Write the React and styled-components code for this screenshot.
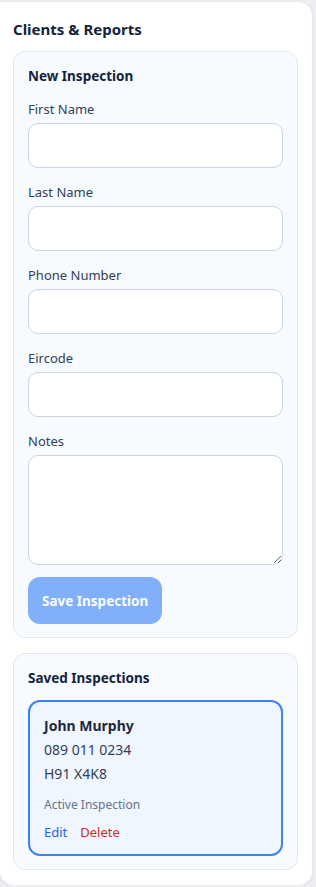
import React, { useState } from 'react';
import styled, { createGlobalStyle } from 'styled-components';

const GlobalStyle = createGlobalStyle`
  html, body {
    margin: 0;
    padding: 0;
    background: #eceef2;
  }
  body {
    font-family: "Noto Sans", "Open Sans", sans-serif;
    color: #1e293b;
  }
  * {
    box-sizing: border-box;
  }
`;

const fields = [
  { key: 'firstName', label: 'First Name' },
  { key: 'lastName', label: 'Last Name' },
  { key: 'phone', label: 'Phone Number' },
  { key: 'eircode', label: 'Eircode' },
];

const App = () => {
  const [form, setForm] = useState({ firstName: '', lastName: '', phone: '', eircode: '', notes: '' });
  const update = (key) => (e) => setForm({ ...form, [key]: e.target.value });

  return (
    <>
      <GlobalStyle />
      <Panel>
        <Title>Clients &amp; Reports</Title>
        <Section>
          <SectionTitle>New Inspection</SectionTitle>
          <Form onSubmit={(e) => e.preventDefault()}>
            {fields.map((f) => (
              <Field key={f.key}>
                <Label>{f.label}</Label>
                <Input value={form[f.key]} onChange={update(f.key)} />
              </Field>
            ))}
            <Field>
              <Label>Notes</Label>
              <TextArea value={form.notes} onChange={update('notes')} />
            </Field>
            <SaveButton type="submit" disabled>Save Inspection</SaveButton>
          </Form>
        </Section>
        <Section>
          <SectionTitle>Saved Inspections</SectionTitle>
          <InspectionCard>
            <ClientName>John Murphy</ClientName>
            <InfoLine>089 011 0234</InfoLine>
            <InfoLine>H91 X4K8</InfoLine>
            <Status>Active Inspection</Status>
            <Actions>
              <LinkButton>Edit</LinkButton>
              <LinkButton danger>Delete</LinkButton>
            </Actions>
          </InspectionCard>
        </Section>
      </Panel>
    </>
  );
};

const Panel = styled.div`
  width: 312px;
  margin-top: 2px;
  min-height: 882px;
  background: #ffffff;
  border-radius: 0 14px 14px 14px;
  box-shadow: 0 1px 4px rgba(15, 23, 42, 0.08);
  padding: 16px 14px 15px 13px;
  display: flex;
  flex-direction: column;
  gap: 15px;
`;

const Title = styled.h2`
  margin: 0 0 -4px;
  font-size: 15px;
  line-height: 22px;
  font-weight: 700;
  color: #14243b;
`;

const Section = styled.div`
  background: #f7faff;
  border: 1px solid #e2e8f0;
  border-radius: 12px;
  padding: 15px 14px 13px;
`;

const SectionTitle = styled.h3`
  margin: 0 0 15px;
  font-size: 13.5px;
  line-height: 18px;
  font-weight: 700;
  color: #14243b;
`;

const Form = styled.form`
  display: flex;
  flex-direction: column;
  gap: 15px;
`;

const Field = styled.div`
  display: flex;
  flex-direction: column;
  gap: 5px;
`;

const Label = styled.label`
  font-size: 13px;
  line-height: 18px;
  color: #334155;
`;

const Input = styled.input`
  height: 45px;
  width: 100%;
  border: 1px solid #cbd5e1;
  border-radius: 10px;
  background: #ffffff;
  padding: 0 12px;
  font: inherit;
  font-size: 14px;
  outline: none;
`;

const TextArea = styled.textarea`
  height: 110px;
  width: 100%;
  border: 1px solid #cbd5e1;
  border-radius: 10px;
  background: #ffffff;
  padding: 10px 12px;
  font: inherit;
  font-size: 14px;
  outline: none;
  resize: vertical;
`;

const SaveButton = styled.button`
  align-self: flex-start;
  margin-top: -3px;
  height: 47px;
  padding: 0 14px;
  border: none;
  border-radius: 12px;
  background: #3b82f6;
  opacity: 0.62;
  color: #ffffff;
  font-family: inherit;
  font-size: 13.5px;
  font-weight: 700;
`;

const InspectionCard = styled.div`
  margin-top: -2px;
  border: 2px solid #3b82f6;
  border-radius: 12px;
  background: #f0f6ff;
  padding: 12px 14px 13px;
`;

const ClientName = styled.div`
  font-size: 14px;
  line-height: 24px;
  font-weight: 700;
  color: #1e293b;
`;

const InfoLine = styled.div`
  font-size: 14px;
  line-height: 24px;
  color: #334155;
`;

const Status = styled.div`
  margin-top: 10px;
  font-size: 12px;
  line-height: 18px;
  color: #64748b;
`;

const Actions = styled.div`
  margin-top: 9px;
  display: flex;
  gap: 13px;
`;

const LinkButton = styled.button`
  border: none;
  background: none;
  padding: 0;
  font-family: inherit;
  font-size: 13px;
  line-height: 18px;
  color: ${(p) => (p.danger ? '#dc2626' : '#2563eb')};
  cursor: pointer;
`;

export default App;
